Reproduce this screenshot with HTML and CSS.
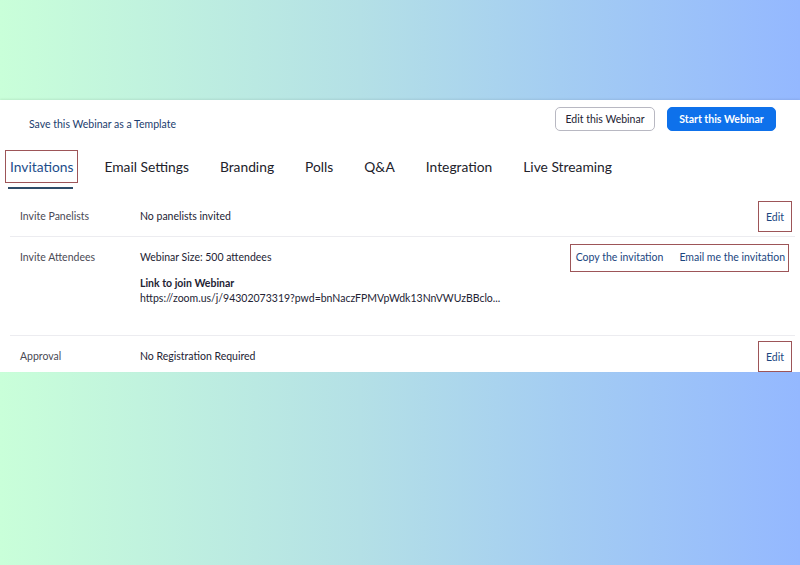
FILE: index.html
```html
<!DOCTYPE html>
<html lang="en">
  <head>
    <meta charset="UTF-8" />
    <meta name="viewport" content="width=device-width, initial-scale=1.0" />
    <title>Webinar - Invitations</title>
    <link rel="stylesheet" href="styles.css">
  </head>
  <body>
    <div class="panel">
      <div class="header">
        <a class="template-link" href="#">Save this Webinar as a Template</a>
        <div class="header-actions">
          <button class="btn btn-outline">Edit this Webinar</button>
          <button class="btn btn-primary">Start this Webinar</button>
        </div>
      </div>

      <div class="tabs">
        <a class="tab active" href="#"><span class="marked">Invitations</span></a>
        <a class="tab" href="#">Email Settings</a>
        <a class="tab" href="#">Branding</a>
        <a class="tab" href="#">Polls</a>
        <a class="tab" href="#">Q&amp;A</a>
        <a class="tab" href="#">Integration</a>
        <a class="tab" href="#">Live Streaming</a>
      </div>

      <div class="rows">
        <div class="row row-panelists">
          <div class="label">Invite Panelists</div>
          <div class="value">No panelists invited</div>
          <div class="actions">
            <a class="marked action" href="#">Edit</a>
          </div>
        </div>

        <div class="row row-attendees">
          <div class="label">Invite Attendees</div>
          <div class="value">
            <div>Webinar Size: 500 attendees</div>
            <div class="link-title">Link to join Webinar</div>
            <div class="link-url">https://zoom.us/j/94302073319?pwd=bnNaczFPMVpWdk13NnVWUzBBclo...</div>
          </div>
          <div class="actions">
            <span class="marked action-group">
              <a class="action" href="#">Copy the invitation</a>
              <a class="action" href="#">Email me the invitation</a>
            </span>
          </div>
        </div>

        <div class="row row-approval">
          <div class="label">Approval</div>
          <div class="value">No Registration Required</div>
          <div class="actions">
            <a class="marked action" href="#">Edit</a>
          </div>
        </div>
      </div>
    </div>
  </body>
</html>
```

FILE: styles.css
```css
html,
body {
  height: 100%;
}
body {
  margin: 0;
  font-family: Lato, "Open Sans", Arial, sans-serif;
  color: #232333;
  background: linear-gradient(to right, #c9ffd9 0%, #b4e0e6 45%, #a4cdf2 70%, #94b8ff 100%);
  overflow: hidden;
}
a {
  text-decoration: none;
}
.panel {
  margin-top: 100px;
  height: 272px;
  background: #fff;
  box-shadow: 0 -1px 2px rgba(0, 0, 0, 0.08);
}
.header {
  display: flex;
  align-items: flex-start;
  justify-content: space-between;
  box-sizing: border-box;
  height: 45px;
  padding: 7px 24px 0 29px;
}
.template-link {
  margin-top: 11px;
  font-size: 10.5px;
  color: #1b3d6e;
}
.header-actions {
  display: flex;
  gap: 12px;
}
.btn {
  font-family: inherit;
  font-size: 10.5px;
  height: 24px;
  border-radius: 5px;
  cursor: pointer;
}
.btn-outline {
  width: 100px;
  background: #fff;
  color: #232333;
  border: 1px solid #b8b8c2;
}
.btn-primary {
  width: 109px;
  background: #0e71eb;
  color: #fff;
  border: 1px solid #0e71eb;
  font-weight: bold;
}
.tabs {
  display: flex;
  gap: 31px;
  box-sizing: border-box;
  height: 46px;
  padding: 0 0 4px 10px;
  align-items: center;
}
.tab {
  position: relative;
  font-size: 13.8px;
  color: #22222b;
}
.tab.active {
  color: #1d4d8a;
}
.tab.active::after {
  content: "";
  position: absolute;
  left: -2px;
  right: 0;
  bottom: -14px;
  height: 2px;
  background: #2e4c68;
}
.tab .marked {
  margin: -8px -5px;
  padding: 7px 4px;
}
.marked {
  border: 1px solid #9d5558;
}
.rows {
  padding: 5px 5px 0 10px;
}
.row {
  display: grid;
  grid-template-columns: 120px 1fr auto;
  align-items: start;
  padding-left: 10px;
  font-size: 10.5px;
  border-bottom: 1px solid #ececf0;
}
.row:last-child {
  border-bottom: none;
}
.label {
  color: #4a4a55;
}
.value {
  color: #232333;
}
.actions {
  display: flex;
  justify-content: flex-end;
}
.action {
  color: #1b4680;
}
a.marked.action {
  padding: 9px 7px 8px;
}
.action-group {
  display: flex;
  gap: 16px;
  padding: 6px 3px 7px 5px;
}
.row-panelists {
  height: 40px;
  align-items: center;
}
.row-panelists .actions {
  padding-right: 3px;
}
.row-attendees {
  height: 85px;
  padding-top: 13px;
  line-height: 13px;
}
.row-attendees .label,
.row-attendees > .value {
  padding-top: 1px;
}
.row-attendees .actions {
  margin-top: -6px;
  padding-right: 6px;
}
.link-title {
  margin-top: 13px;
  font-weight: bold;
}
.link-url {
  margin-top: 2px;
}
.row-approval {
  box-sizing: border-box;
  height: 36px;
  padding-top: 4px;
  align-items: center;
}
.row-approval .actions {
  padding-right: 3px;
}
```
